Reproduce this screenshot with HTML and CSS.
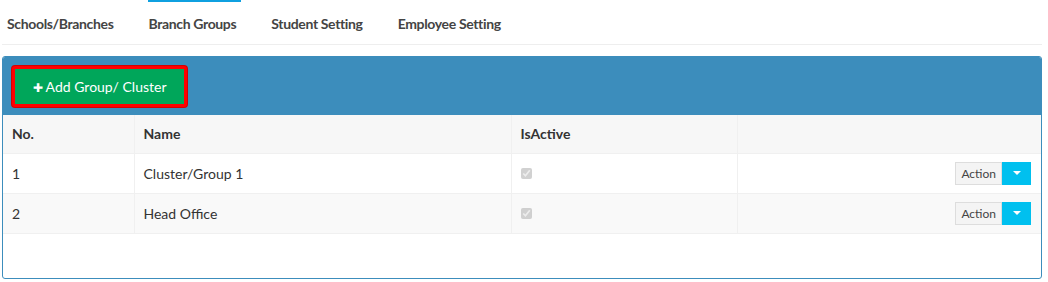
FILE: index.html
```html
<!DOCTYPE html>
<html lang="en">
<head>
    <meta charset="UTF-8">
    <title>Branch Groups</title>
    <link rel="stylesheet" href="styles.css">
</head>
<body>
    <ul class="nav-tabs">
        <li class="tab">Schools/Branches</li>
        <li class="tab active">Branch Groups</li>
        <li class="tab">Student Setting</li>
        <li class="tab">Employee Setting</li>
    </ul>

    <div class="box">
        <div class="box-header">
            <button class="btn-add"><span class="plus">&#10010;</span> Add Group/ Cluster</button>
        </div>
        <table class="groups">
            <thead>
                <tr>
                    <th class="col-no">No.</th>
                    <th class="col-name">Name</th>
                    <th class="col-active">IsActive</th>
                    <th></th>
                </tr>
            </thead>
            <tbody>
                <tr>
                    <td>1</td>
                    <td>Cluster/Group 1</td>
                    <td><input type="checkbox" checked disabled></td>
                    <td class="actions">
                        <div class="btn-group">
                            <span class="btn-action">Action</span><span class="btn-caret"><span class="caret"></span></span>
                        </div>
                    </td>
                </tr>
                <tr class="odd">
                    <td>2</td>
                    <td>Head Office</td>
                    <td><input type="checkbox" checked disabled></td>
                    <td class="actions">
                        <div class="btn-group">
                            <span class="btn-action">Action</span><span class="btn-caret"><span class="caret"></span></span>
                        </div>
                    </td>
                </tr>
            </tbody>
        </table>
    </div>
</body>
</html>
```

FILE: styles.css
```css
* {
    margin: 0;
    padding: 0;
    box-sizing: border-box;
}

body {
    font-family: Lato, "Open Sans", sans-serif;
    font-size: 14px;
    color: #333333;
    background-color: #ffffff;
    padding: 0 6px 0 2px;
}

.nav-tabs {
    list-style: none;
    display: flex;
    gap: 30px;
    height: 45px;
    padding-left: 5px;
    border-bottom: 1px solid #eeeeee;
}

.tab {
    padding: 13px 5px 0 0;
    font-weight: bold;
    font-size: 14px;
    letter-spacing: -0.35px;
    color: #444444;
    border-top: 2px solid transparent;
}

.tab.active {
    border-top-color: #0fa0e0;
}

.box {
    margin-top: 11px;
    border: 1px solid #3c8dbc;
    border-radius: 3px;
    height: 223px;
    overflow: hidden;
}

.box-header {
    background-color: #3c8dbc;
    height: 58px;
    padding: 9px 0 0 9px;
}

.btn-add {
    background-color: #00a65a;
    color: #ffffff;
    border: 3px solid #ff0000;
    border-radius: 3px;
    box-shadow: 0 0 0 1px #d40000;
    height: 41px;
    width: 175px;
    font-family: inherit;
    font-size: 14px;
    text-align: center;
}

.plus {
    font-size: 12px;
}

.groups {
    width: 100%;
    border-collapse: collapse;
}

.groups th,
.groups td {
    text-align: left;
    padding: 0 9px;
    border-left: 1px solid #f0f0f0;
    height: 40px;
}

.groups th:first-child,
.groups td:first-child {
    border-left: none;
}

.groups th {
    font-weight: bold;
    background-color: #f7f7f7;
    height: 38px;
}

.groups tr.odd td {
    background-color: #f9f9f9;
}

.groups tbody tr {
    border-top: 1px solid #f0f0f0;
}

.groups tbody tr:last-child {
    border-bottom: 1px solid #f0f0f0;
}

.col-no {
    width: 131px;
}

.col-name {
    width: 377px;
}

.col-active {
    width: 226px;
}

input[type="checkbox"] {
    width: 11px;
    height: 11px;
    margin-top: 2px;
}

.actions {
    text-align: right !important;
    padding-right: 10px !important;
}

.btn-group {
    display: inline-flex;
    height: 23px;
    vertical-align: middle;
}

.btn-action {
    background-color: #f4f4f4;
    border: 1px solid #dddddd;
    color: #444444;
    font-size: 12px;
    padding: 0 5px;
    line-height: 21px;
}

.btn-caret {
    background-color: #00c0ef;
    width: 29px;
    display: flex;
    align-items: center;
    justify-content: center;
}

.caret {
    width: 0;
    height: 0;
    border-left: 4px solid transparent;
    border-right: 4px solid transparent;
    border-top: 4px solid #ffffff;
}
```
